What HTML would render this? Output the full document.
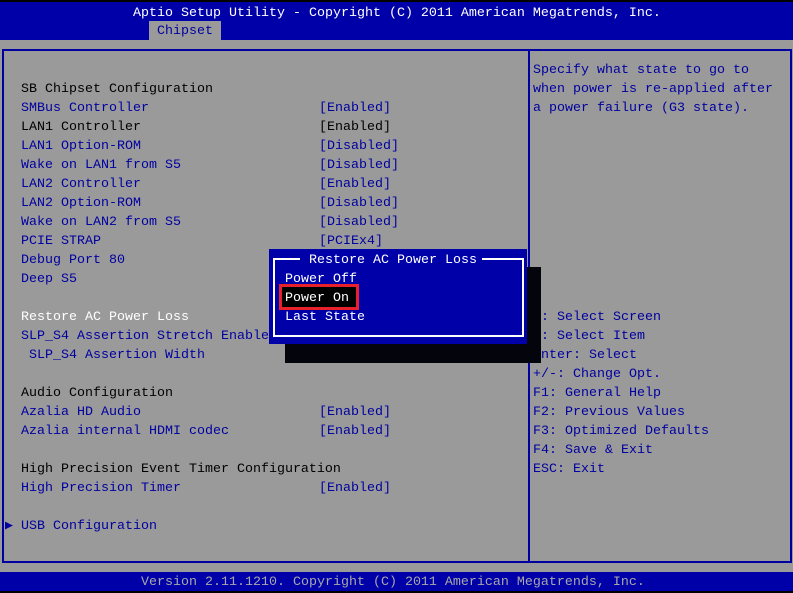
<!DOCTYPE html>
<html><head><style>
body{margin:0;width:793px;height:593px;background:#9a9a9a;position:relative;overflow:hidden;font-family:"Liberation Mono","DejaVu Sans Mono",monospace;font-size:13.33px}
.t{position:absolute;white-space:pre;line-height:19px;height:19px;margin-top:1px}
.b{color:#0000a0}.k{color:#000}.w{color:#fff}
.ln{position:absolute;background:#0000a0}
</style></head><body>
<div style="position:absolute;left:0;top:0;width:793px;height:2px;background:#000"></div>
<div style="position:absolute;left:0;top:2px;width:793px;height:38px;background:#0000a8"></div>
<div class="t w" style="left:133px;top:3px;color:#fff">Aptio Setup Utility - Copyright (C) 2011 American Megatrends, Inc.</div>
<div style="position:absolute;left:149px;top:21px;width:72px;height:19px;background:#9a9a9a"></div>
<div class="t b" style="left:157px;top:21px">Chipset</div>
<div class="ln" style="left:2px;top:49px;width:790px;height:2px"></div>
<div class="ln" style="left:2px;top:49px;width:2px;height:514px"></div>
<div class="ln" style="left:790px;top:49px;width:2px;height:514px"></div>
<div class="ln" style="left:528px;top:49px;width:2px;height:514px"></div>
<div class="ln" style="left:2px;top:561px;width:790px;height:2px"></div>
<div style="position:absolute;left:0;top:572px;width:793px;height:19px;background:#0000a8"></div>
<div style="position:absolute;left:0;top:591px;width:793px;height:2px;background:#000"></div>
<div class="t" style="left:141px;top:572px;color:#a8a8a8">Version 2.11.1210. Copyright (C) 2011 American Megatrends, Inc.</div>

<div class="t k" style="left:21px;top:79px">SB Chipset Configuration</div>
<div class="t b" style="left:21px;top:98px">SMBus Controller</div><div class="t b" style="left:319px;top:98px">[Enabled]</div>
<div class="t k" style="left:21px;top:117px">LAN1 Controller</div><div class="t k" style="left:319px;top:117px">[Enabled]</div>
<div class="t b" style="left:21px;top:136px">LAN1 Option-ROM</div><div class="t b" style="left:319px;top:136px">[Disabled]</div>
<div class="t b" style="left:21px;top:155px">Wake on LAN1 from S5</div><div class="t b" style="left:319px;top:155px">[Disabled]</div>
<div class="t b" style="left:21px;top:174px">LAN2 Controller</div><div class="t b" style="left:319px;top:174px">[Enabled]</div>
<div class="t b" style="left:21px;top:193px">LAN2 Option-ROM</div><div class="t b" style="left:319px;top:193px">[Disabled]</div>
<div class="t b" style="left:21px;top:212px">Wake on LAN2 from S5</div><div class="t b" style="left:319px;top:212px">[Disabled]</div>
<div class="t b" style="left:21px;top:231px">PCIE STRAP</div><div class="t b" style="left:319px;top:231px">[PCIEx4]</div>
<div class="t b" style="left:21px;top:250px">Debug Port 80</div>
<div class="t b" style="left:21px;top:269px">Deep S5</div>
<div class="t w" style="left:21px;top:307px">Restore AC Power Loss</div>
<div class="t b" style="left:21px;top:326px">SLP_S4 Assertion Stretch Enable</div>
<div class="t b" style="left:29px;top:345px">SLP_S4 Assertion Width</div>
<div class="t k" style="left:21px;top:383px">Audio Configuration</div>
<div class="t b" style="left:21px;top:402px">Azalia HD Audio</div><div class="t b" style="left:319px;top:402px">[Enabled]</div>
<div class="t b" style="left:21px;top:421px">Azalia internal HDMI codec</div><div class="t b" style="left:319px;top:421px">[Enabled]</div>
<div class="t k" style="left:21px;top:459px">High Precision Event Timer Configuration</div>
<div class="t b" style="left:21px;top:478px">High Precision Timer</div><div class="t b" style="left:319px;top:478px">[Enabled]</div>
<div class="t b" style="left:5px;top:516px">▶ USB Configuration</div>

<div class="t b" style="left:533px;top:60px">Specify what state to go to</div>
<div class="t b" style="left:533px;top:79px">when power is re-applied after</div>
<div class="t b" style="left:533px;top:98px">a power failure (G3 state).</div>
<div class="t b" style="left:533px;top:307px">←: Select Screen</div>
<div class="t b" style="left:533px;top:326px">↓: Select Item</div>
<div class="t b" style="left:533px;top:345px">Enter: Select</div>
<div class="t b" style="left:533px;top:364px">+/-: Change Opt.</div>
<div class="t b" style="left:533px;top:383px">F1: General Help</div>
<div class="t b" style="left:533px;top:402px">F2: Previous Values</div>
<div class="t b" style="left:533px;top:421px">F3: Optimized Defaults</div>
<div class="t b" style="left:533px;top:440px">F4: Save &amp; Exit</div>
<div class="t b" style="left:533px;top:459px">ESC: Exit</div>

<div style="position:absolute;left:285px;top:267px;width:256px;height:96px;background:#04040c"></div>
<div style="position:absolute;left:269px;top:249px;width:258px;height:95px;background:#0000a8"></div>
<div style="position:absolute;left:273px;top:258px;width:247px;height:75px;border:2px solid #fff"></div>
<div style="position:absolute;left:300px;top:250px;width:182px;height:19px;background:#0000a8"></div>
<div class="t w" style="left:309px;top:250px">Restore AC Power Loss</div>
<div class="t w" style="left:285px;top:269px">Power Off</div>
<div style="position:absolute;left:279px;top:284px;width:74px;height:20px;border:3px solid #e8202a;background:#000"></div>
<div class="t w" style="left:285px;top:288px">Power On</div>
<div class="t w" style="left:285px;top:307px">Last State</div>
</body></html>
